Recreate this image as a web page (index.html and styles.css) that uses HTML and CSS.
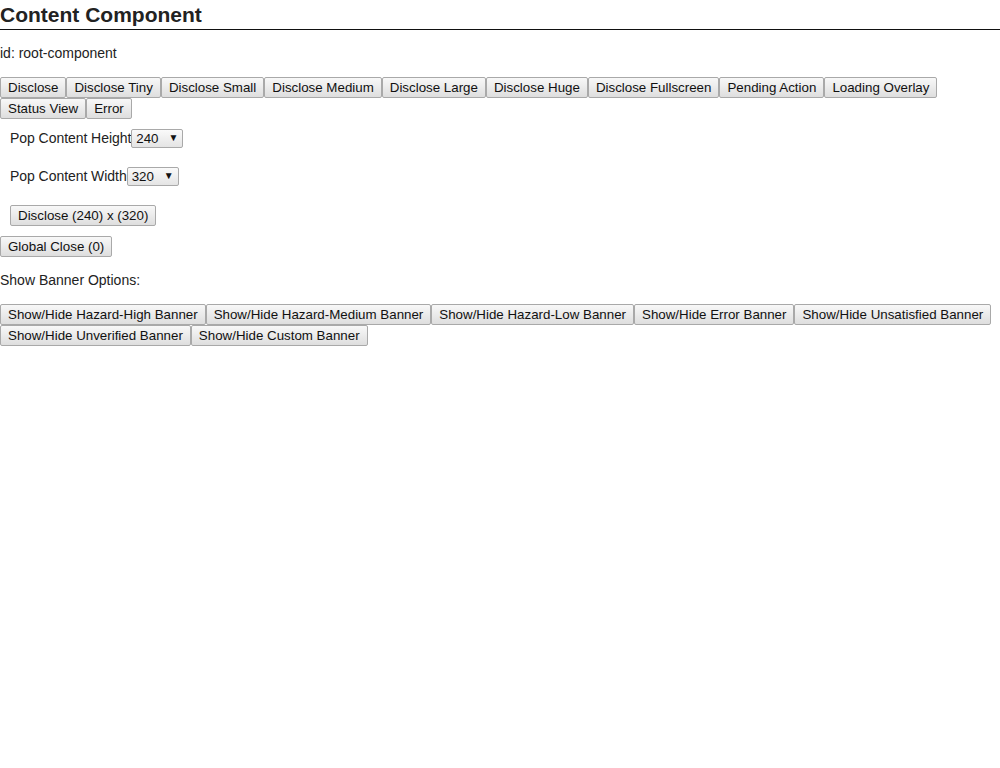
FILE: index.html
```html
<!DOCTYPE html>
<html>
<head>
<meta charset="utf-8">
<link rel="stylesheet" href="styles.css">
</head>
<body>
<h1 class="title">Content Component</h1>
<p class="idline">id: root-component</p>
<div class="btnrow"><button class="btn">Disclose</button><button class="btn">Disclose Tiny</button><button class="btn">Disclose Small</button><button class="btn">Disclose Medium</button><button class="btn">Disclose Large</button><button class="btn">Disclose Huge</button><button class="btn">Disclose Fullscreen</button><button class="btn">Pending Action</button><button class="btn">Loading Overlay</button><button class="btn">Status View</button><button class="btn">Error</button></div>
<div class="pop">
  <div class="field"><span class="label">Pop Content Height</span><span class="selwrap"><select class="sel sel-h"><option>240</option></select></span></div>
  <div class="field"><span class="label">Pop Content Width</span><span class="selwrap"><select class="sel sel-w"><option>320</option></select></span></div>
  <div class="field"><button class="btn">Disclose (240) x (320)</button></div>
</div>
<div class="close"><button class="btn">Global Close (0)</button></div>
<p class="banner-label">Show Banner Options:</p>
<div class="btnrow"><button class="btn">Show/Hide Hazard-High Banner</button><button class="btn">Show/Hide Hazard-Medium Banner</button><button class="btn">Show/Hide Hazard-Low Banner</button><button class="btn">Show/Hide Error Banner</button><button class="btn">Show/Hide Unsatisfied Banner</button><button class="btn">Show/Hide Unverified Banner</button><button class="btn">Show/Hide Custom Banner</button></div>
</body>
</html>
```
FILE: styles.css
```css
html, body {
  margin: 0;
  padding: 0;
  background: #fff;
}
body {
  font-family: "Liberation Sans", Arial, sans-serif;
  font-size: 14px;
  color: #222;
}
.title {
  margin: 0;
  font-size: 21px;
  font-weight: bold;
  line-height: 29px;
  height: 29px;
  border-bottom: 1px solid #111;
  color: #222;
}
.idline {
  margin: 15px 0 0 0;
  line-height: 16px;
  height: 16px;
}
.btnrow {
  display: flex;
  flex-wrap: wrap;
  margin-top: 16px;
}
.btn {
  font-family: "Liberation Sans", Arial, sans-serif;
  font-size: 13.333px;
  color: #111;
  height: 21px;
  line-height: 16px;
  padding: 2px 7px 1px;
  margin: 0;
  border: 1px solid #a9a9a9;
  border-radius: 2px;
  background: linear-gradient(#f8f8f8, #dedede);
  box-sizing: border-box;
}
.pop {
  padding-left: 10px;
}
.field {
  display: flex;
  align-items: center;
  height: 19px;
  margin-top: 10px;
}
.field + .field {
  margin-top: 19px;
}
.field:last-child {
  height: 21px;
}
.label {
  line-height: 16px;
  padding-bottom: 2px;
  letter-spacing: -0.05px;
}
.selwrap {
  position: relative;
  display: inline-block;
  height: 19px;
}
.selwrap::after {
  content: "\25BC";
  position: absolute;
  right: 5px;
  top: 3px;
  font-size: 10px;
  color: #111;
  pointer-events: none;
}
.sel {
  appearance: none;
  -webkit-appearance: none;
  display: block;
  font-family: "Liberation Sans", Arial, sans-serif;
  font-size: 13.333px;
  color: #111;
  height: 19px;
  padding: 0 0 0 4px;
  margin: 0;
  border: 1px solid #a9a9a9;
  border-radius: 2px;
  background: linear-gradient(#fafafa, #e4e4e4);
  box-sizing: border-box;
}
.sel-h { width: 52px; }
.sel-w { width: 52px; }
.close {
  margin-top: 10px;
}
.banner-label {
  margin: 15px 0 0 0;
  line-height: 16px;
}
```
